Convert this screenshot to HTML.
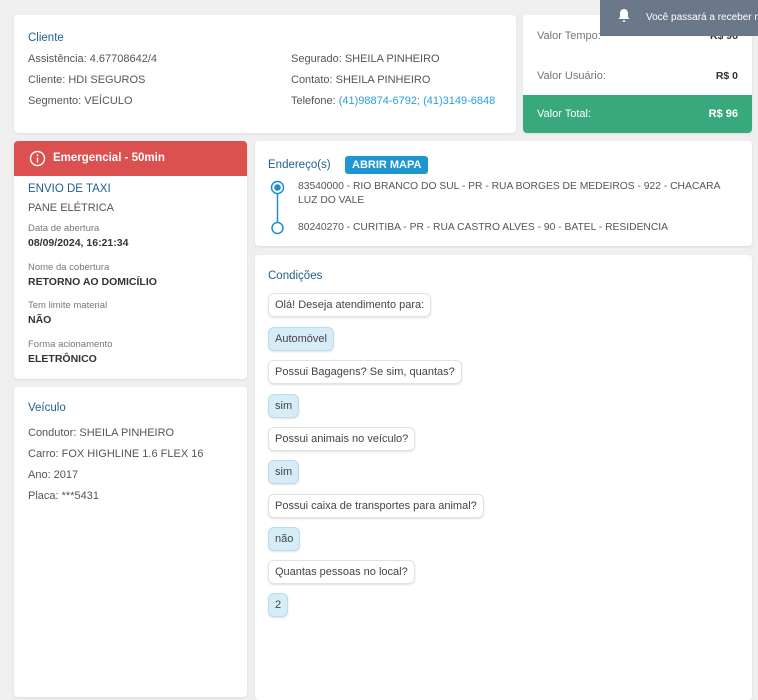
<!DOCTYPE html>
<html><head><meta charset="utf-8"><style>
*{box-sizing:border-box;margin:0;padding:0}
body{width:758px;height:688px;background:#efefef;font-family:"Liberation Sans",sans-serif;font-size:11px;color:#555;position:relative;overflow:hidden}
.card{position:absolute;background:#fff;border-radius:4px;box-shadow:0 1px 2px rgba(0,0,0,.08)}
.t{color:#1f5f8b;font-size:11.5px}
.ab{position:absolute;white-space:nowrap}
.lbl{font-size:9.5px;color:#777}
.v{color:#333;font-weight:bold;font-size:10.5px}
.b{position:absolute;left:13px;padding:5px 6px;border-radius:6px;border:1px solid #e2e2e2;background:#fff;box-shadow:0 1px 2px rgba(0,0,0,.12);white-space:nowrap;font-size:11px;color:#444}
.a{background:#d6edf8;border-color:#bcdcec}
</style></head><body>
<div class="card" style="left:14px;top:15px;width:502px;height:118px">
<div class="ab t" style="left:14px;top:17px">Cliente</div>
<div class="ab" style="left:14px;top:38px">Assistência: 4.67708642/4</div>
<div class="ab" style="left:14px;top:59px">Cliente: HDI SEGUROS</div>
<div class="ab" style="left:14px;top:80px">Segmento: VEÍCULO</div>
<div class="ab" style="left:277px;top:38px">Segurado: SHEILA PINHEIRO</div>
<div class="ab" style="left:277px;top:59px">Contato: SHEILA PINHEIRO</div>
<div class="ab" style="left:277px;top:80px">Telefone: <span style="color:#2a9fd6">(41)98874-6792; (41)3149-6848</span></div>
</div>
<div class="card" style="left:523px;top:15px;width:229px;height:118px;overflow:hidden">
<div class="ab" style="left:14px;top:15px;color:#777">Valor Tempo:</div>
<div class="ab v" style="right:14px;top:15px">R$ 96</div>
<div class="ab" style="left:14px;top:55px;color:#777">Valor Usuário:</div>
<div class="ab v" style="right:14px;top:55px">R$ 0</div>
<div class="ab" style="left:0;top:80px;width:229px;height:38px;background:#37a97d"></div>
<div class="ab" style="left:14px;top:93px;color:#fff">Valor Total:</div>
<div class="ab" style="right:14px;top:93px;color:#fff;font-weight:bold">R$ 96</div>
</div>
<div class="ab" style="left:600px;top:0;width:158px;height:36px;background:#6b7889;color:#fff;font-size:10px">
<svg style="position:absolute;left:17px;top:8px" width="14" height="15" viewBox="0 0 14 15"><path d="M7 1C4.5 1 3 3 3 5.5V9L1.5 11H12.5L11 9V5.5C11 3 9.5 1 7 1Z M5.5 12.5H8.5A1.5 1.5 0 0 1 5.5 12.5Z" fill="#fff"/></svg>
<span style="position:absolute;left:46px;top:12px">Você passará a receber n</span></div>
<div class="card" style="left:14px;top:141px;width:233px;height:238px;overflow:hidden">
<div class="ab" style="left:0;top:0;width:233px;height:35px;background:#dc5050"></div>
<svg class="ab" style="left:15px;top:9px" width="17" height="17" viewBox="0 0 17 17"><circle cx="8.5" cy="8.5" r="7" fill="none" stroke="#fff" stroke-width="1.4"/><rect x="7.8" y="7.5" width="1.4" height="5" fill="#fff"/><circle cx="8.5" cy="5.2" r="0.9" fill="#fff"/></svg>
<div class="ab" style="left:39px;top:11px;color:#fff;font-weight:bold;font-size:11.5px">Emergencial - 50min</div>
<div class="ab t" style="left:14px;top:42px">ENVIO DE TAXI</div>
<div class="ab" style="left:14px;top:61px">PANE ELÉTRICA</div>
<div class="ab lbl" style="left:14px;top:82px">Data de abertura</div>
<div class="ab v" style="left:14px;top:96px">08/09/2024, 16:21:34</div>
<div class="ab lbl" style="left:14px;top:121px">Nome da cobertura</div>
<div class="ab v" style="left:14px;top:135px">RETORNO AO DOMICÍLIO</div>
<div class="ab lbl" style="left:14px;top:159px">Tem limite material</div>
<div class="ab v" style="left:14px;top:173px">NÃO</div>
<div class="ab lbl" style="left:14px;top:198px">Forma acionamento</div>
<div class="ab v" style="left:14px;top:212px">ELETRÔNICO</div>
</div>
<div class="card" style="left:14px;top:387px;width:233px;height:310px">
<div class="ab t" style="left:14px;top:15px">Veículo</div>
<div class="ab" style="left:14px;top:40px">Condutor: SHEILA PINHEIRO</div>
<div class="ab" style="left:14px;top:61px">Carro: FOX HIGHLINE 1.6 FLEX 16</div>
<div class="ab" style="left:14px;top:82px">Ano: 2017</div>
<div class="ab" style="left:14px;top:103px">Placa: ***5431</div>
</div>
<div class="card" style="left:255px;top:141px;width:497px;height:105px">
<div class="ab t" style="left:13px;top:18px">Endereço(s)</div>
<div class="ab" style="left:90px;top:15px;background:#1e96d2;color:#fff;font-weight:bold;font-size:11px;padding:3px 7px;border-radius:3px">ABRIR MAPA</div>
<svg class="ab" style="left:15px;top:39px" width="16" height="56" viewBox="0 0 16 56"><circle cx="7.5" cy="7.5" r="6" fill="none" stroke="#1e8fc7" stroke-width="1.5"/><circle cx="7.5" cy="7.5" r="3.3" fill="#1e8fc7"/><line x1="7.5" y1="13.5" x2="7.5" y2="42" stroke="#1e8fc7" stroke-width="1.5"/><circle cx="7.5" cy="48" r="5.5" fill="none" stroke="#1e8fc7" stroke-width="1.5"/></svg>
<div class="ab" style="left:43px;top:40px;font-size:10.3px">83540000 - RIO BRANCO DO SUL - PR - RUA BORGES DE MEDEIROS - 922 - CHACARA</div>
<div class="ab" style="left:43px;top:54px;font-size:10.3px">LUZ DO VALE</div>
<div class="ab" style="left:43px;top:81px;font-size:10.3px">80240270 - CURITIBA - PR - RUA CASTRO ALVES - 90 - BATEL - RESIDENCIA</div>
</div>
<div class="card" style="left:255px;top:255px;width:497px;height:445px">
<div class="ab t" style="left:13px;top:15px">Condições</div>
<div class="b" style="top:38px">Olá! Deseja atendimento para:</div>
<div class="b a" style="top:72px">Automóvel</div>
<div class="b" style="top:105px">Possui Bagagens? Se sim, quantas?</div>
<div class="b a" style="top:139px">sim</div>
<div class="b" style="top:172px">Possui animais no veículo?</div>
<div class="b a" style="top:205px">sim</div>
<div class="b" style="top:239px">Possui caixa de transportes para animal?</div>
<div class="b a" style="top:272px">não</div>
<div class="b" style="top:305px">Quantas pessoas no local?</div>
<div class="b a" style="top:338px">2</div>
</div>
</body></html>
